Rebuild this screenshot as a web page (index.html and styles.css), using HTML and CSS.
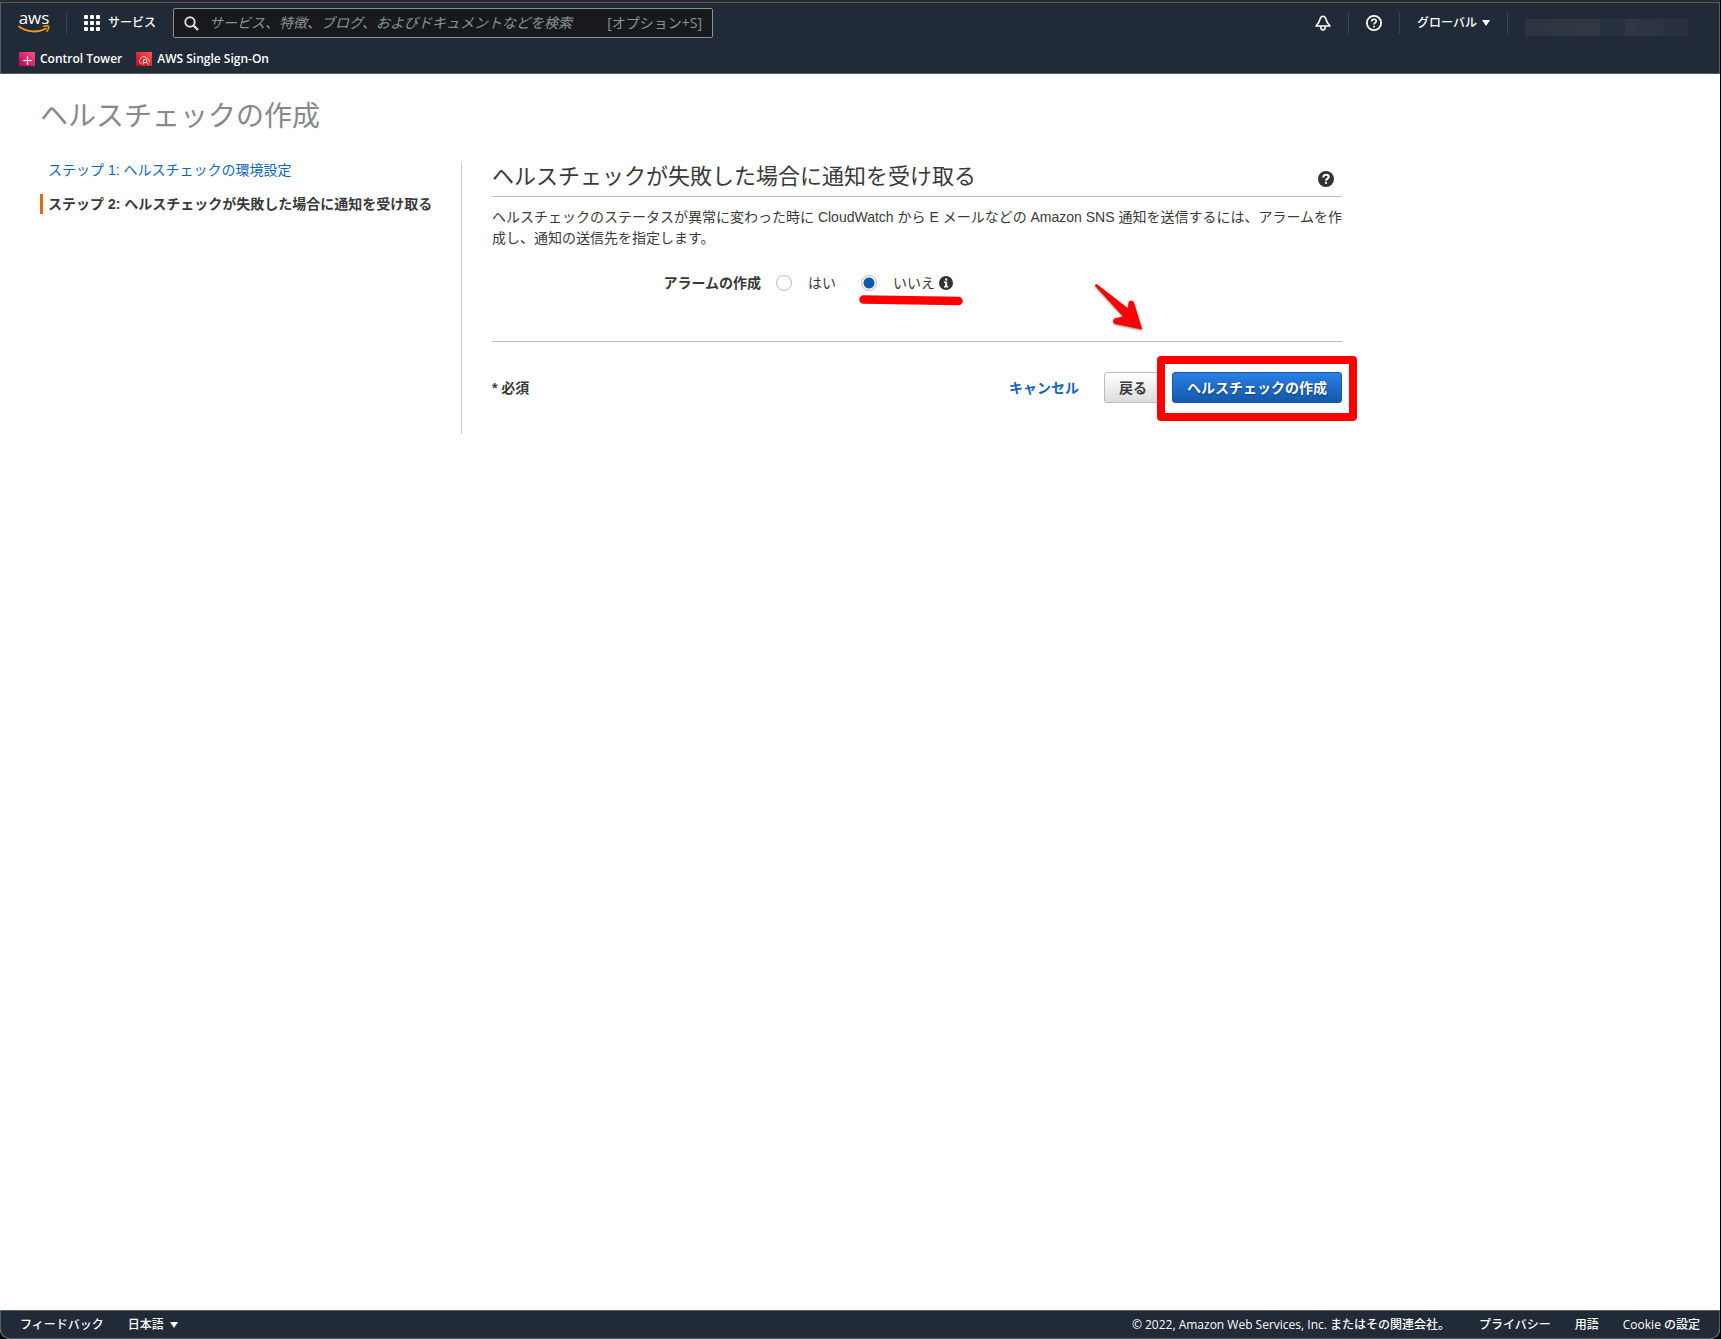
FILE: index.html
```html
<!DOCTYPE html>
<html lang="ja">
<head>
<meta charset="utf-8">
<title>ヘルスチェックの作成</title>
<link rel="stylesheet" href="styles.css">
</head>
<body>
<div class="window">
  <header class="header">
    <div class="nav">
      <a class="logo" href="#" aria-label="aws">
        <span class="logo-text">aws</span>
        <svg class="logo-smile" width="32" height="9" viewBox="0 0 32 9"><path d="M1 1.500C9 7.500 20 8 28 3.500" fill="none" stroke="#f90" stroke-width="1.800" stroke-linecap="round"/><path d="M25.500 1.300C28 .6 30 .8 30.600 1.400C31 2.300 30.300 4.500 29 6.200" fill="none" stroke="#f90" stroke-width="1.400" stroke-linecap="round"/></svg>
      </a>
      <span class="divider"></span>
      <button class="nav-button services" type="button">
        <svg width="16" height="16" viewBox="0 0 16 16" fill="#fff"><rect width="4" height="4" rx="1"/><rect x="6" width="4" height="4" rx="1"/><rect x="12" width="4" height="4" rx="1"/><rect y="6" width="4" height="4" rx="1"/><rect x="6" y="6" width="4" height="4" rx="1"/><rect x="12" y="6" width="4" height="4" rx="1"/><rect y="12" width="4" height="4" rx="1"/><rect x="6" y="12" width="4" height="4" rx="1"/><rect x="12" y="12" width="4" height="4" rx="1"/></svg>
        <span>サービス</span>
      </button>
      <label class="search">
        <svg width="15" height="15" viewBox="0 0 15 15" fill="none" stroke="#d5dbdb" stroke-width="2"><circle cx="6" cy="6" r="4.700"/><path d="M9.500 9.500L14 14" stroke-width="2.400"/></svg>
        <input class="search-input" type="text" aria-label="検索" placeholder="サービス、特徴、ブログ、およびドキュメントなどを検索">
        <span class="search-key">[オプション+S]</span>
      </label>
      <div class="nav-right">
        <button class="nav-button" type="button" aria-label="通知">
          <svg width="16" height="16" viewBox="0 0 16 16" fill="none" stroke="#fff" stroke-width="1.600" stroke-linejoin="round"><path d="M8 1.200C6.600 1.200 5.700 2 5.200 3.800C4.300 7.300 3.300 9 1 11H15C12.700 9 11.700 7.300 10.800 3.800C10.300 2 9.400 1.200 8 1.200Z"/><path d="M5.700 11.600C5.700 14 6.600 15 8 15S10.300 14 10.300 11.600"/></svg>
        </button>
        <span class="divider"></span>
        <button class="nav-button" type="button" aria-label="ヘルプ">
          <svg width="16" height="16" viewBox="0 0 16 16" fill="none" stroke="#fff" stroke-width="1.800"><circle cx="8" cy="8" r="7.100"/><path d="M5.700 6.500C5.700 4.900 6.700 4.200 8 4.200S10.300 5 10.300 6.200C10.300 7.700 8 7.700 8 9.600" stroke-width="1.600"/><path d="M8 10.800V12.500" stroke-width="1.700"/></svg>
        </button>
        <span class="divider"></span>
        <button class="nav-button region" type="button"><span>グローバル</span><span class="caret"></span></button>
        <span class="divider"></span>
        <div class="account"><i class="a"></i><i class="b"></i><i class="c"></i><i class="d"></i><i class="e"></i><i class="f"></i><i class="g"></i></div>
      </div>
    </div>
    <nav class="favorites">
      <a class="favorite" href="#">
        <svg width="16" height="14" viewBox="0 0 16 14"><defs><linearGradient id="pink" x1="0" y1="1" x2="1" y2="0"><stop offset="0" stop-color="#b0084d"/><stop offset="1" stop-color="#ff4f8b"/></linearGradient></defs><rect width="16" height="14" fill="url(#pink)"/><path d="M8.500 5V12M5 8.500H12" stroke="#fff" stroke-width="1"/><path d="M8.500 4L9.800 5.500H7.200ZM8.500 13L9.800 11.500H7.200ZM4 8.500L5.500 7.200V9.800ZM13 8.500L11.500 7.200V9.800Z" fill="#fff"/></svg>
        <span>Control Tower</span>
      </a>
      <a class="favorite" href="#">
        <svg width="16" height="14" viewBox="0 0 16 14" fill="none"><defs><linearGradient id="red" x1="0" y1="1" x2="1" y2="0"><stop offset="0" stop-color="#bd0816"/><stop offset="1" stop-color="#ff5252"/></linearGradient></defs><rect width="16" height="14" fill="url(#red)"/><path d="M6 11H4.500C2.700 10.700 2.700 8.200 4.500 7.700C4.600 4.200 9.600 3.500 10.700 6.300C12 6 12.500 7 12.300 7.700C13.600 8.200 13.700 9.500 13 10.300" stroke="#fff" stroke-width=".8"/><circle cx="9" cy="9" r="1.800" stroke="#fff" stroke-width=".8"/><path d="M10.200 10.300L13 12.800M8 10.500L7 12.500" stroke="#fff" stroke-width=".8"/></svg>
        <span>AWS Single Sign-On</span>
      </a>
    </nav>
  </header>

  <main class="main">
    <h1 class="title">ヘルスチェックの作成</h1>
    <div class="columns">
      <ol class="steps">
        <li class="step"><a href="#">ステップ 1: ヘルスチェックの環境設定</a></li>
        <li class="step current">ステップ 2: ヘルスチェックが失敗した場合に通知を受け取る</li>
      </ol>
      <form class="panel">
        <div class="panel-head">
          <h2 class="panel-title">ヘルスチェックが失敗した場合に通知を受け取る</h2>
          <svg class="help" width="16" height="16" viewBox="0 0 16 16"><circle cx="8" cy="8" r="8" fill="#333"/><path d="M5.300 6.400C5.300 4.500 6.500 3.800 8 3.800S10.700 4.600 10.700 6C10.700 7.700 8 7.500 8 9.700" fill="none" stroke="#fff" stroke-width="2"/><rect x="7" y="10.800" width="2" height="2" fill="#fff"/></svg>
        </div>
        <p class="description">ヘルスチェックのステータスが異常に変わった時に CloudWatch から E メールなどの Amazon SNS 通知を送信するには、アラームを作成し、通知の送信先を指定します。</p>
        <div class="field" role="radiogroup" aria-labelledby="alarm">
          <span class="field-label" id="alarm">アラームの作成</span>
          <label class="option"><input class="radio" type="radio" name="alarm"><span>はい</span></label>
          <label class="option"><input class="radio" type="radio" name="alarm" checked><span>いいえ</span>
            <svg class="info" width="14" height="14" viewBox="0 0 14 14"><circle cx="7" cy="7" r="7" fill="#333"/><path d="M6 2.500H8.200V4.500H6ZM5 5.600H8.200V10H9.200V11.500H5V10H6V7H5Z" fill="#fff"/></svg>
            <svg class="mark-line" width="104" height="11" viewBox="0 0 104 11"><path d="M4.500 4.500L99.500 6" stroke="red" stroke-width="8.500" stroke-linecap="round"/></svg>
          </label>
        </div>
        <div class="actions">
          <span class="required">* 必須</span>
          <a class="cancel" href="#">キャンセル</a>
          <button class="button" type="button">戻る</button>
          <div class="submit">
            <button class="button primary" type="button">ヘルスチェックの作成</button>
            <span class="mark-box"></span>
            <svg class="mark-arrow" width="56" height="54" viewBox="0 0 56 54"><path d="M3 4.200C3.300 3 4.600 3 5.300 3.600L36 27.300L36.500 21.800C37 18.800 41.500 19.200 42 21.600L50.300 48.500L23.500 43C20 42 20.500 37.300 24.300 37L31 35.600L3.200 5Z" fill="red"/></svg>
          </div>
        </div>
      </form>
    </div>
  </main>

  <footer class="footer">
    <a href="#">フィードバック</a>
    <button class="nav-button language" type="button"><span>日本語</span><span class="caret"></span></button>
    <span class="copyright">© 2022, Amazon Web Services, Inc. またはその関連会社。</span>
    <a href="#">プライバシー</a>
    <a href="#">用語</a>
    <a href="#">Cookie の設定</a>
  </footer>
</div>
</body>
</html>
```

FILE: styles.css
```css
* { box-sizing: border-box; }
html { background: #000; }
body {
  margin: 0;
  font: 14px/20px "Liberation Sans", "Noto Sans CJK JP", sans-serif;
  color: #3a3a3a;
}
svg { display: block; flex: none; }
a { color: inherit; text-decoration: none; }

.window {
  display: flex;
  flex-direction: column;
  min-height: 100vh;
  margin-right: 1px;
  border-top: 2px solid #2a2a2a;
  border-radius: 0 0 10px 10px;
  background: #fff;
  overflow: hidden;
}

.header, .footer {
  border: 1px solid #545b64;
  background: #212a37;
  color: #fff;
  font: 500 12px/16px "Open Sans", "Noto Sans CJK JP", sans-serif;
}
.nav { display: flex; align-items: center; height: 40px; padding-left: 17px; }
.logo { display: flex; flex-direction: column; align-items: center; width: 32px; height: 24px; }
.logo-text { font: 500 17px/14px "Open Sans", sans-serif; }
.divider { width: 1px; height: 22px; background: #3b4450; }
.logo + .divider { margin-left: 16px; }
.nav-button {
  display: flex;
  align-items: center;
  padding: 0;
  border: 0;
  background: none;
  color: #fff;
  font: inherit;
}
.services { gap: 8px; margin: 0 17px; }
.search {
  display: flex;
  align-items: center;
  gap: 10px;
  width: 540px;
  height: 30px;
  padding: 0 10px;
  border: 1px solid #879596;
  border-radius: 2px;
  background: #17191d;
  color: #879596;
  font-size: 14px;
  font-weight: 400;
}
.search-input {
  flex: 1;
  min-width: 0;
  padding: 0;
  border: 0;
  outline: 0;
  background: none;
  color: #fff;
  font: inherit;
}
.search-input::placeholder { color: #879596; font-style: italic; }
.nav-right { display: flex; align-items: center; gap: 17px; margin-left: auto; padding-right: 31px; }
.region { gap: 5px; }
.caret { border: 4px solid transparent; border-top: 6px solid #fff; border-bottom: 0; }
.account { display: flex; height: 17px; margin-top: 8px; }
.a, .f { width: 25px; background: #2f3441; }
.b { width: 25px; background: #303542; }
.c { width: 25px; background: #323743; }
.d { width: 25px; background: #27303d; }
.e { width: 13px; background: #303643; }
.f { background: #2d3340; }
.g { width: 25px; background: #29313e; }

.favorites { display: flex; align-items: center; gap: 14px; height: 30px; padding: 2px 18px 0; }
.favorite { display: flex; align-items: center; gap: 5px; font-weight: 600; }

.main { flex: 1; padding: 23px 40px 40px; }
.title { margin: 0 0 23px; color: #888; font-size: 28px; font-weight: 400; line-height: 40px; }
.columns { display: flex; align-items: flex-start; }
.steps {
  display: flex;
  flex-direction: column;
  gap: 14px;
  flex: 0 0 421px;
  margin: 0;
  padding: 0;
  list-style: none;
}
.step { padding-left: 5px; border-left: 3px solid transparent; }
.step a, .cancel { color: #1166bb; }
.current { border-color: #dd6b10; font-weight: 700; }

.panel {
  flex: 0 1 881px;
  margin-top: 3px;
  padding: 0 0 31px 30px;
  border-left: 1px solid #ccc;
}
.panel-head {
  display: flex;
  align-items: center;
  justify-content: space-between;
  padding: 0 8px 5px 0;
  border-bottom: 1px solid #bbb;
}
.panel-title { margin: 0; font-size: 22px; font-weight: 400; line-height: 28px; }
.help { margin-top: 4px; }
.description { margin: 10px -4px 22px 0; line-height: 21px; }
.field { display: flex; align-items: center; height: 24px; margin-bottom: 46px; }
.field-label { width: 269px; margin-right: 15px; text-align: right; font-weight: 700; }
.option { position: relative; display: flex; align-items: center; margin-right: 25px; }
.radio {
  appearance: none;
  width: 16px;
  height: 16px;
  margin: 0 16px 0 0;
  border: 1px solid #bbb;
  border-radius: 50%;
  background: #fff;
}
.radio:checked { background: radial-gradient(circle, #1158b0 5px, #fff 6px); }
.info { margin-left: 4px; }
.mark-line { position: absolute; left: -2px; top: 22px; }

.actions { display: flex; align-items: center; padding-top: 30px; border-top: 1px solid #bbb; }
.required, .cancel { font-weight: 700; }
.cancel { margin: 0 25px 0 auto; }
.button {
  display: block;
  height: 31px;
  padding: 0 14px;
  border: 1px solid #bbb;
  border-radius: 3px;
  background: linear-gradient(#fff, #ddd);
  color: #3a3a3a;
  font: inherit;
  font-weight: 700;
}
.primary {
  border-color: #1158a8;
  background: linear-gradient(#2a80e4, #1459ab);
  color: #fff;
  text-shadow: 0 1px 2px #0a3366;
}
.submit { position: relative; margin-left: 10px; }
.mark-box { position: absolute; inset: -16px -15px -18px; border: 8px solid red; border-radius: 4px; pointer-events: none; }
.mark-arrow { position: absolute; left: -80px; top: -91px; filter: drop-shadow(0 1px 1px rgba(0, 0, 0, .5)); }

.footer {
  display: flex;
  align-items: center;
  gap: 24px;
  height: 29px;
  padding: 0 19px;
  border-radius: 0 0 10px 10px;
}
.language { gap: 6px; }
.copyright { margin-left: auto; margin-right: 5px; }
```
